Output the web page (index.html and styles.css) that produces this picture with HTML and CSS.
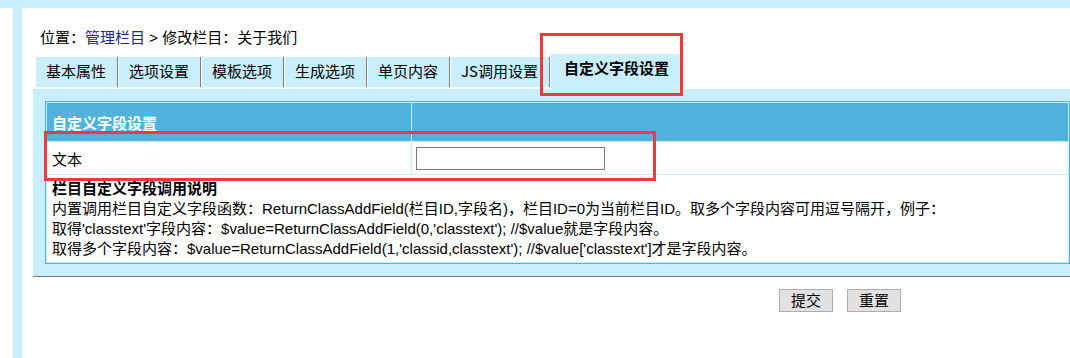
FILE: index.html
```html
<!DOCTYPE html>
<html lang="zh-CN">
<head>
<meta charset="utf-8">
<title>修改栏目</title>
<link rel="stylesheet" href="styles.css">
</head>
<body>
<div class="topbar"></div>
<div class="layout">
  <div class="side"></div>
  <div class="main">
    <div class="crumb">位置：<a href="#" class="crumb-link">管理栏目</a> &gt; 修改栏目：关于我们</div>
    <ul class="tabs">
      <li class="tab">基本属性</li>
      <li class="tab">选项设置</li>
      <li class="tab">模板选项</li>
      <li class="tab">生成选项</li>
      <li class="tab">单页内容</li>
      <li class="tab">JS调用设置</li>
      <li class="tab tab-active">自定义字段设置</li>
    </ul>
    <div class="panel">
      <table class="form">
        <tr class="row-head">
          <td class="cell cell-label">自定义字段设置</td>
          <td class="cell"></td>
        </tr>
        <tr class="row-field">
          <td class="cell cell-label">文本</td>
          <td class="cell cell-input"><input type="text" class="txt"></td>
        </tr>
        <tr class="row-note">
          <td class="cell cell-note" colspan="2"><b class="note-title">栏目自定义字段调用说明</b><br>内置调用栏目自定义字段函数：ReturnClassAddField(栏目ID,字段名)，栏目ID=0为当前栏目ID。取多个字段内容可用逗号隔开，例子：<br>取得'classtext'字段内容：$value=ReturnClassAddField(0,'classtext'); //$value就是字段内容。<br>取得多个字段内容：$value=ReturnClassAddField(1,'classid,classtext'); //$value['classtext']才是字段内容。</td>
        </tr>
      </table>
    </div>
    <div class="actions">
      <button class="btn" type="button">提交</button>
      <button class="btn" type="button">重置</button>
    </div>
  </div>
</div>
<div class="mark mark-tab"></div>
<div class="mark mark-row"></div>
</body>
</html>
```
FILE: styles.css
```css
html, body {
  margin: 0;
  padding: 0;
  background: #fff;
}
body {
  position: relative;
  height: 358px;
  overflow: hidden;
  font-family: "Liberation Sans", "Noto Sans CJK SC", sans-serif;
  font-size: 15px;
  color: #000;
}
.topbar {
  height: 8px;
  background: #c9efff;
}
.layout {
  display: flex;
  height: 350px;
}
.side {
  flex: none;
  width: 9px;
  margin-left: 13px;
  background: #c9efff;
}
.main {
  flex: 1;
  min-width: 0;
  padding-left: 11px;
}
.crumb {
  padding: 20px 0 0 7px;
  height: 20px;
  line-height: 20px;
  white-space: nowrap;
}
.crumb-link {
  color: #1b2a86;
  text-decoration: none;
}
.tabs {
  display: flex;
  align-items: flex-end;
  height: 35px;
  margin: 6px 0 0 2px;
  padding: 0;
  list-style: none;
  font-family: "Noto Sans CJK SC", sans-serif;
}
.tab {
  background: #c9efff;
  padding: 0 11px 2px 10px;
  line-height: 28px;
  margin-bottom: 2px;
  border-left: 1px solid #fff;
  border-right: 1px solid #7f7f7f;
  white-space: nowrap;
}
.tab-active {
  padding: 0 13px 7px;
  margin-bottom: 0;
  font-weight: bold;
}
.panel {
  background: #c9efff;
  padding: 12px 0 12px 12px;
  border-bottom: 1px solid #6f7477;
}
.form {
  width: 100%;
  border-collapse: separate;
  border-spacing: 1px;
  border: 1px solid #50b3de;
  background: #c9efff;
}
.cell {
  box-sizing: border-box;
  padding: 0 5px;
  background: #fff;
  font-size: 15px;
  vertical-align: middle;
}
.cell-label {
  width: 364px;
}
.row-head {
  height: 38px;
}
.row-head .cell {
  background: #50b3de;
  color: #fff;
  font-weight: bold;
}
.row-field {
  height: 32px;
}
.cell-input {
  padding-left: 4px;
}
.txt {
  display: block;
  box-sizing: border-box;
  width: 189px;
  height: 23px;
  margin: 0;
  padding: 0 2px;
  border: 1px solid #7a7a7a;
  background: #fff;
  font-family: inherit;
  font-size: 15px;
}
.cell-note {
  padding: 4px 5px 3px;
  line-height: 20px;
  white-space: nowrap;
}
.note-title {
  font-weight: bold;
}
.actions {
  display: flex;
  gap: 14px;
  padding: 12px 0 0 746px;
}
.btn {
  box-sizing: border-box;
  height: 23px;
  margin: 0;
  padding: 0 11px;
  border: 1px solid #adadad;
  border-radius: 0;
  background: #e1e1e1;
  color: #000;
  font-family: inherit;
  font-size: 15px;
  line-height: 21px;
}
.mark {
  position: absolute;
  box-sizing: border-box;
  border: 3px solid #f03a3a;
}
.mark-tab {
  left: 540px;
  top: 33px;
  width: 143px;
  height: 63px;
}
.mark-row {
  left: 44px;
  top: 131px;
  width: 612px;
  height: 50px;
}
```
